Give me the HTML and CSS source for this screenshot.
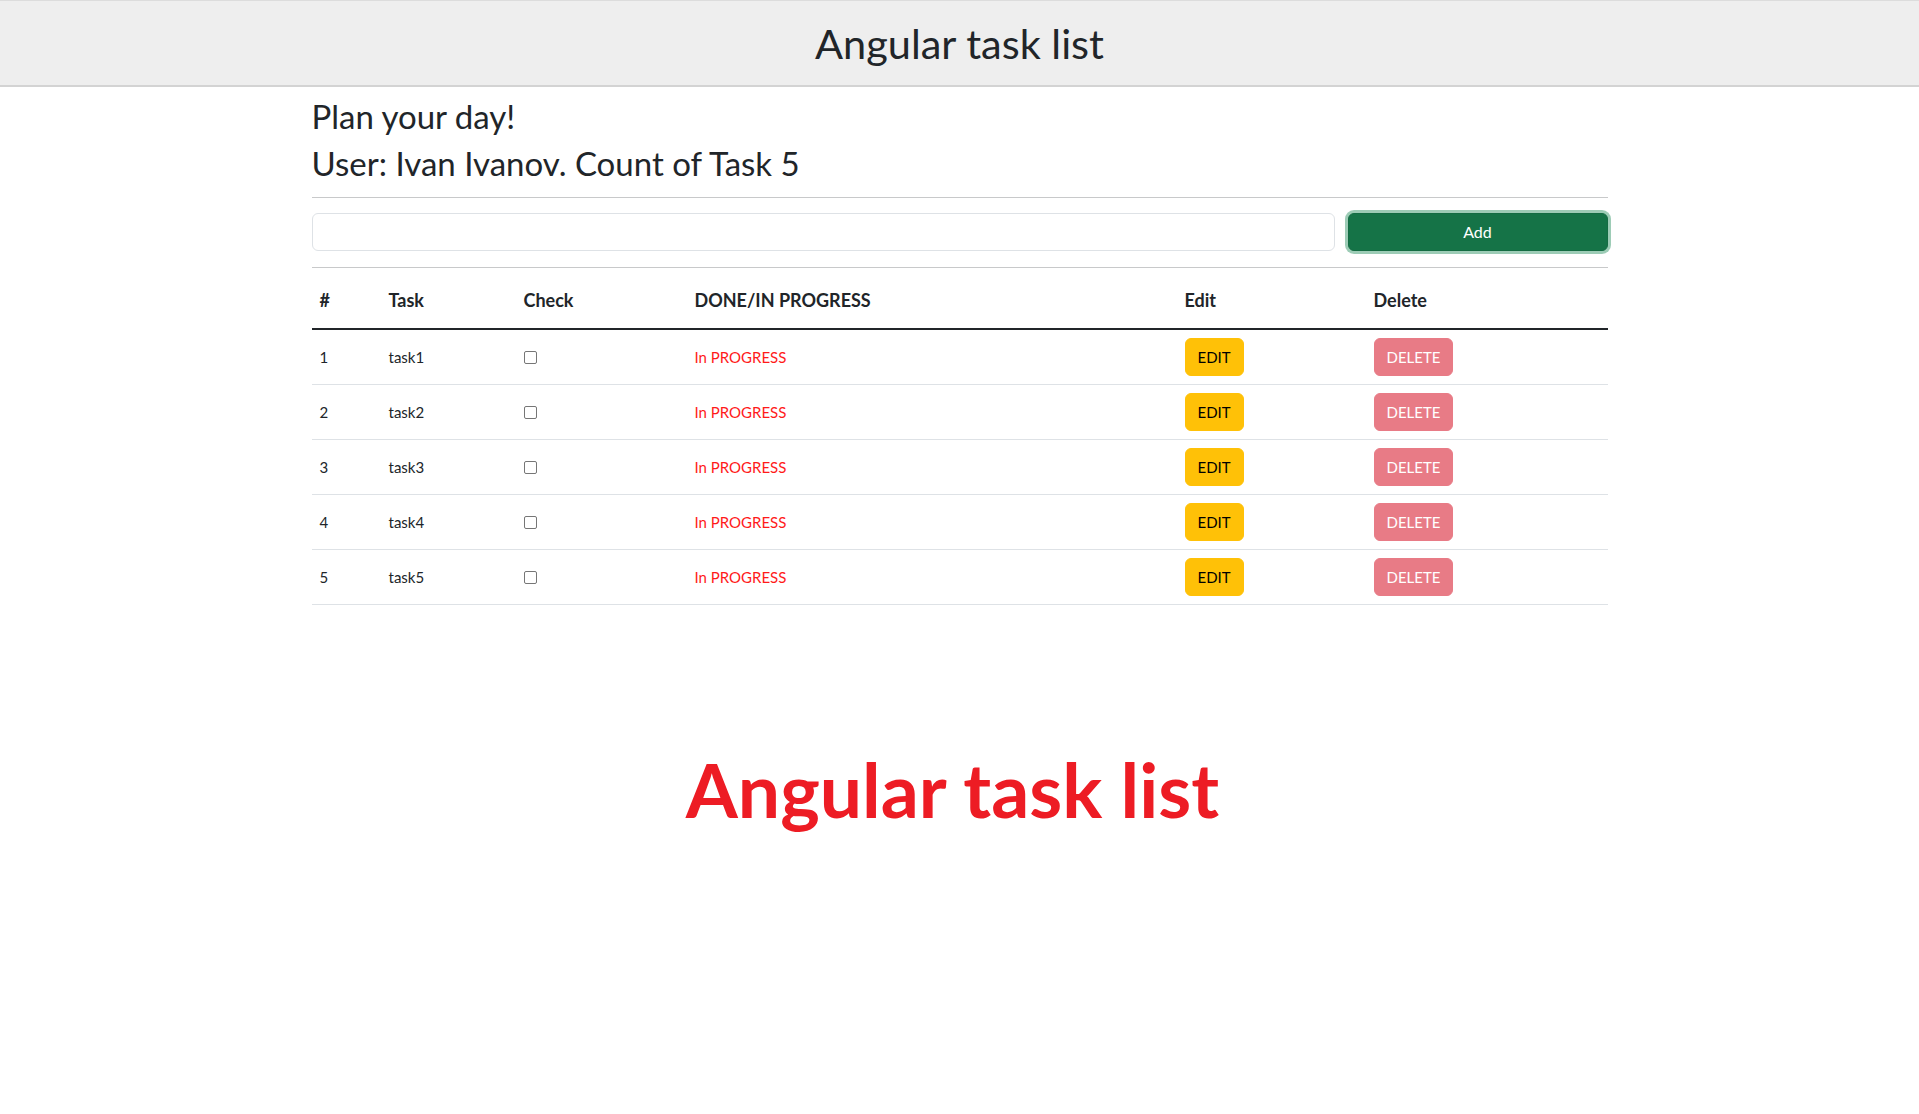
FILE: index.html
```html
<!DOCTYPE html>
<html lang="en">
<head>
<meta charset="utf-8">
<title>Angular task list</title>
<link rel="stylesheet" href="styles.css">
</head>
<body>
<header class="topbar">
  <h1 class="topbar-title">Angular task list</h1>
</header>
<main class="container">
  <h2 class="heading">Plan your day!</h2>
  <h2 class="heading">User: Ivan Ivanov. Count of Task 5</h2>
  <hr class="divider">
  <div class="add-row">
    <input class="task-input" type="text">
    <button class="btn btn-add" type="button">Add</button>
  </div>
  <hr class="divider">
  <table class="tasks">
    <colgroup>
      <col class="c-num"><col class="c-task"><col class="c-check"><col class="c-status"><col class="c-edit"><col class="c-del">
    </colgroup>
    <thead>
      <tr><th>#</th><th>Task</th><th>Check</th><th>DONE/IN PROGRESS</th><th>Edit</th><th>Delete</th></tr>
    </thead>
    <tbody>
      <tr><td>1</td><td>task1</td><td><input class="check" type="checkbox"></td><td class="status">In PROGRESS</td><td><button class="btn btn-edit">EDIT</button></td><td><button class="btn btn-del">DELETE</button></td></tr>
      <tr><td>2</td><td>task2</td><td><input class="check" type="checkbox"></td><td class="status">In PROGRESS</td><td><button class="btn btn-edit">EDIT</button></td><td><button class="btn btn-del">DELETE</button></td></tr>
      <tr><td>3</td><td>task3</td><td><input class="check" type="checkbox"></td><td class="status">In PROGRESS</td><td><button class="btn btn-edit">EDIT</button></td><td><button class="btn btn-del">DELETE</button></td></tr>
      <tr><td>4</td><td>task4</td><td><input class="check" type="checkbox"></td><td class="status">In PROGRESS</td><td><button class="btn btn-edit">EDIT</button></td><td><button class="btn btn-del">DELETE</button></td></tr>
      <tr><td>5</td><td>task5</td><td><input class="check" type="checkbox"></td><td class="status">In PROGRESS</td><td><button class="btn btn-edit">EDIT</button></td><td><button class="btn btn-del">DELETE</button></td></tr>
    </tbody>
  </table>
  <div class="banner">Angular task list</div>
</main>
</body>
</html>
```
FILE: styles.css
```css
* { box-sizing: border-box; }
html, body { margin: 0; padding: 0; }
body {
  font-family: Lato, "Open Sans", sans-serif;
  font-size: 16px;
  line-height: 1.5;
  color: #212529;
  background: #fff;
}
.topbar {
  background: #eeeeee;
  border-top: 1px solid #dcdcdc;
  border-bottom: 2px solid #d3d3d3;
  padding: 18px 0;
  text-align: center;
}
.topbar-title {
  margin: 0;
  font-size: 41.5px;
  font-weight: 400;
  line-height: 48px;
}
.container {
  width: 1296px;
  margin: 0 auto;
}
.heading {
  margin: 10px 0 7px;
  font-size: 33px;
  font-weight: 400;
  line-height: 1.2;
}
.heading + .heading { margin-top: 0; }
.divider {
  border: 0;
  border-top: 1px solid #c8c9ca;
  margin: 14px 0 15px;
}
.add-row + .divider { margin: 16px 0; }
.add-row {
  display: flex;
  gap: 13px;
  align-items: center;
}
.task-input {
  flex: 1;
  height: 38px;
  border: 1px solid #dee2e6;
  border-radius: 6px;
  font: inherit;
  padding: 6px 12px;
}
.btn {
  font-family: inherit;
  font-size: 15px;
  line-height: 24px;
  padding: 6px 12px;
  border-radius: 6px;
  border: 1px solid transparent;
  cursor: pointer;
}
.btn-add {
  width: 260px;
  height: 38px;
  font-size: 16px;
  background: #157347;
  border-color: #146c43;
  color: #fff;
  box-shadow: 0 0 0 3px rgba(60, 153, 110, 0.5);
}
.tasks {
  width: 100%;
  border-collapse: collapse;
  table-layout: fixed;
}
.c-num { width: 69px; }
.c-task { width: 135px; }
.c-check { width: 171px; }
.c-status { width: 490px; }
.c-edit { width: 189px; }
.c-del { width: 242px; }
.tasks th {
  text-align: left;
  font-weight: 700;
  font-size: 18px;
  line-height: 24px;
  padding: 4px 8px 16px;
  border-bottom: 2px solid #212529;
}
.tasks td {
  padding: 8px;
  font-size: 15px;
  vertical-align: middle;
  border-bottom: 1px solid #dee2e6;
}
.status { color: #ff1a1a; }
.check {
  appearance: none;
  -webkit-appearance: none;
  width: 13px;
  height: 13px;
  margin: 1px 0 0;
  border: 1px solid #767676;
  border-radius: 2px;
  background: #fff;
  display: block;
}
.btn-edit {
  background: #ffc107;
  border-color: #ffc107;
  color: #000;
}
.btn-del {
  background: #e87b86;
  border-color: #e87b86;
  color: #fff;
}
.banner {
  margin-top: 139px;
  text-align: center;
  color: #ed1c24;
  font-family: Lato, sans-serif;
  font-weight: 700;
  font-size: 75px;
  line-height: 1.2;
  padding-right: 14px;
}
```
